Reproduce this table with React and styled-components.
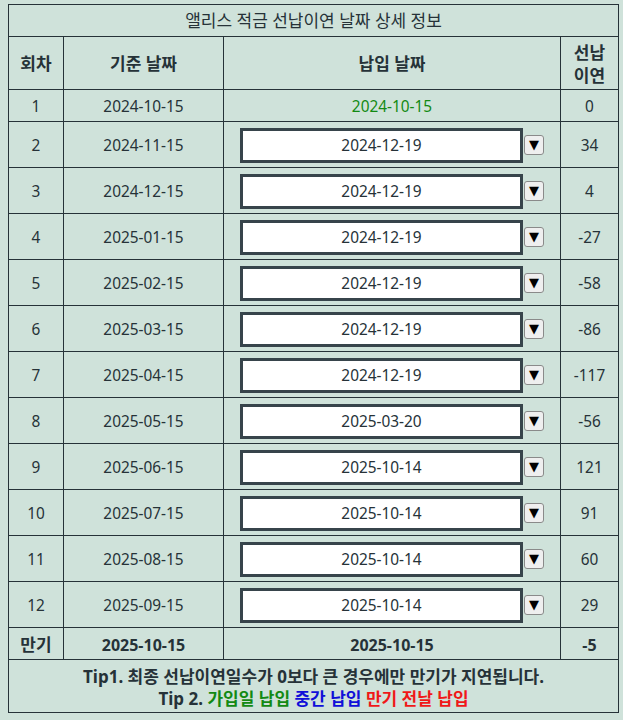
import React from "react";
import styled, { createGlobalStyle } from "styled-components";

const rows = [
  { no: 1, base: "2024-10-15", paid: "2024-10-15", diff: 0, first: true },
  { no: 2, base: "2024-11-15", paid: "2024-12-19", diff: 34 },
  { no: 3, base: "2024-12-15", paid: "2024-12-19", diff: 4 },
  { no: 4, base: "2025-01-15", paid: "2024-12-19", diff: -27 },
  { no: 5, base: "2025-02-15", paid: "2024-12-19", diff: -58 },
  { no: 6, base: "2025-03-15", paid: "2024-12-19", diff: -86 },
  { no: 7, base: "2025-04-15", paid: "2024-12-19", diff: -117 },
  { no: 8, base: "2025-05-15", paid: "2025-03-20", diff: -56 },
  { no: 9, base: "2025-06-15", paid: "2025-10-14", diff: 121 },
  { no: 10, base: "2025-07-15", paid: "2025-10-14", diff: 91 },
  { no: 11, base: "2025-08-15", paid: "2025-10-14", diff: 60 },
  { no: 12, base: "2025-09-15", paid: "2025-10-14", diff: 29 },
];

function App() {
  return (
    <>
      <GlobalStyle />
      <Table>
        <colgroup>
          <col style={{ width: 55 }} />
          <col style={{ width: 160 }} />
          <col style={{ width: 337 }} />
          <col style={{ width: 58 }} />
        </colgroup>
        <thead>
          <Row $h={32}>
            <Title colSpan={4}>앨리스 적금 선납이연 날짜 상세 정보</Title>
          </Row>
          <Row $h={53}>
            <Head>회차</Head>
            <Head>기준 날짜</Head>
            <Head>납입 날짜</Head>
            <Head>
              선납
              <br />
              이연
            </Head>
          </Row>
        </thead>
        <tbody>
          {rows.map((r) => (
            <Row key={r.no} $h={r.first ? 32 : 46}>
              <Cell>{r.no}</Cell>
              <Cell>{r.base}</Cell>
              <Cell>
                {r.first ? (
                  <Green>{r.paid}</Green>
                ) : (
                  <Picker>
                    <DateBox>{r.paid}</DateBox>
                    <DropButton>▼</DropButton>
                  </Picker>
                )}
              </Cell>
              <Cell>{r.diff}</Cell>
            </Row>
          ))}
          <Row $h={32}>
            <Cell $bold $ko>만기</Cell>
            <Cell $bold $big>2025-10-15</Cell>
            <Cell $bold $big>2025-10-15</Cell>
            <Cell $bold $big>-5</Cell>
          </Row>
          <Row $h={53}>
            <TipCell colSpan={4}>
              Tip1. 최종 선납이연일수가 0보다 큰 경우에만 만기가 지연됩니다.
              <br />
              Tip 2. <Tip $c="#138a13">가입일 납입</Tip>{" "}
              <Tip $c="#1010d8">중간 납입</Tip>{" "}
              <Tip $c="#f01818">만기 전날 납입</Tip>
            </TipCell>
          </Row>
        </tbody>
      </Table>
    </>
  );
}
export default App;

const GlobalStyle = createGlobalStyle`
  body {
    margin: 0;
    padding: 4px 0 0 8px;
    background: #cfe2da;
    font-family: "Noto Sans", "Noto Sans CJK KR", sans-serif;
    color: #263238;
  }
`;

const Table = styled.table`
  width: 610px;
  border-collapse: collapse;
  table-layout: fixed;
  font-size: 15.4px;
  line-height: 20px;
  border: 1px solid #263238;
`;

const Row = styled.tr`
  height: ${(p) => p.$h}px;
`;

const Title = styled.th`
  border: 1px solid #263238;
  padding: 1px 0 0;
  font-size: 17px;
  font-weight: normal;
  text-align: center;
`;

const Head = styled.th`
  border: 1px solid #263238;
  padding: 1px 0 0;
  font-size: 17px;
  line-height: 23px;
  font-weight: bold;
  text-align: center;
`;

const Cell = styled.td`
  border: 1px solid #263238;
  padding: 2px 0 0;
  text-align: center;
  font-size: ${(p) => (p.$ko ? "17px" : p.$big ? "16px" : "inherit")};
  font-weight: ${(p) => (p.$bold ? "bold" : "normal")};
`;

const Green = styled.span`
  color: #138a13;
`;

const Picker = styled.div`
  display: flex;
  align-items: center;
  justify-content: center;
  gap: 1px;
  margin-top: -1px;
`;

const DateBox = styled.div`
  box-sizing: border-box;
  width: 283px;
  height: 35px;
  border: 3px solid #37444b;
  background: #fff;
  display: flex;
  align-items: center;
  justify-content: center;
  padding-top: 2px;
  color: #263238;
`;

const DropButton = styled.div`
  box-sizing: border-box;
  width: 20px;
  height: 20px;
  border: 1px solid #8a8a8a;
  border-radius: 3px;
  background: #efefef;
  color: #000;
  font-size: 13px;
  line-height: 18px;
  text-align: center;
  font-family: "DejaVu Sans", sans-serif;
`;

const TipCell = styled.td`
  border: 1px solid #263238;
  padding: 3px 0 0;
  text-align: center;
  font-size: 17px;
  font-weight: bold;
  line-height: 22px;
`;

const Tip = styled.span`
  color: ${(p) => p.$c};
`;
